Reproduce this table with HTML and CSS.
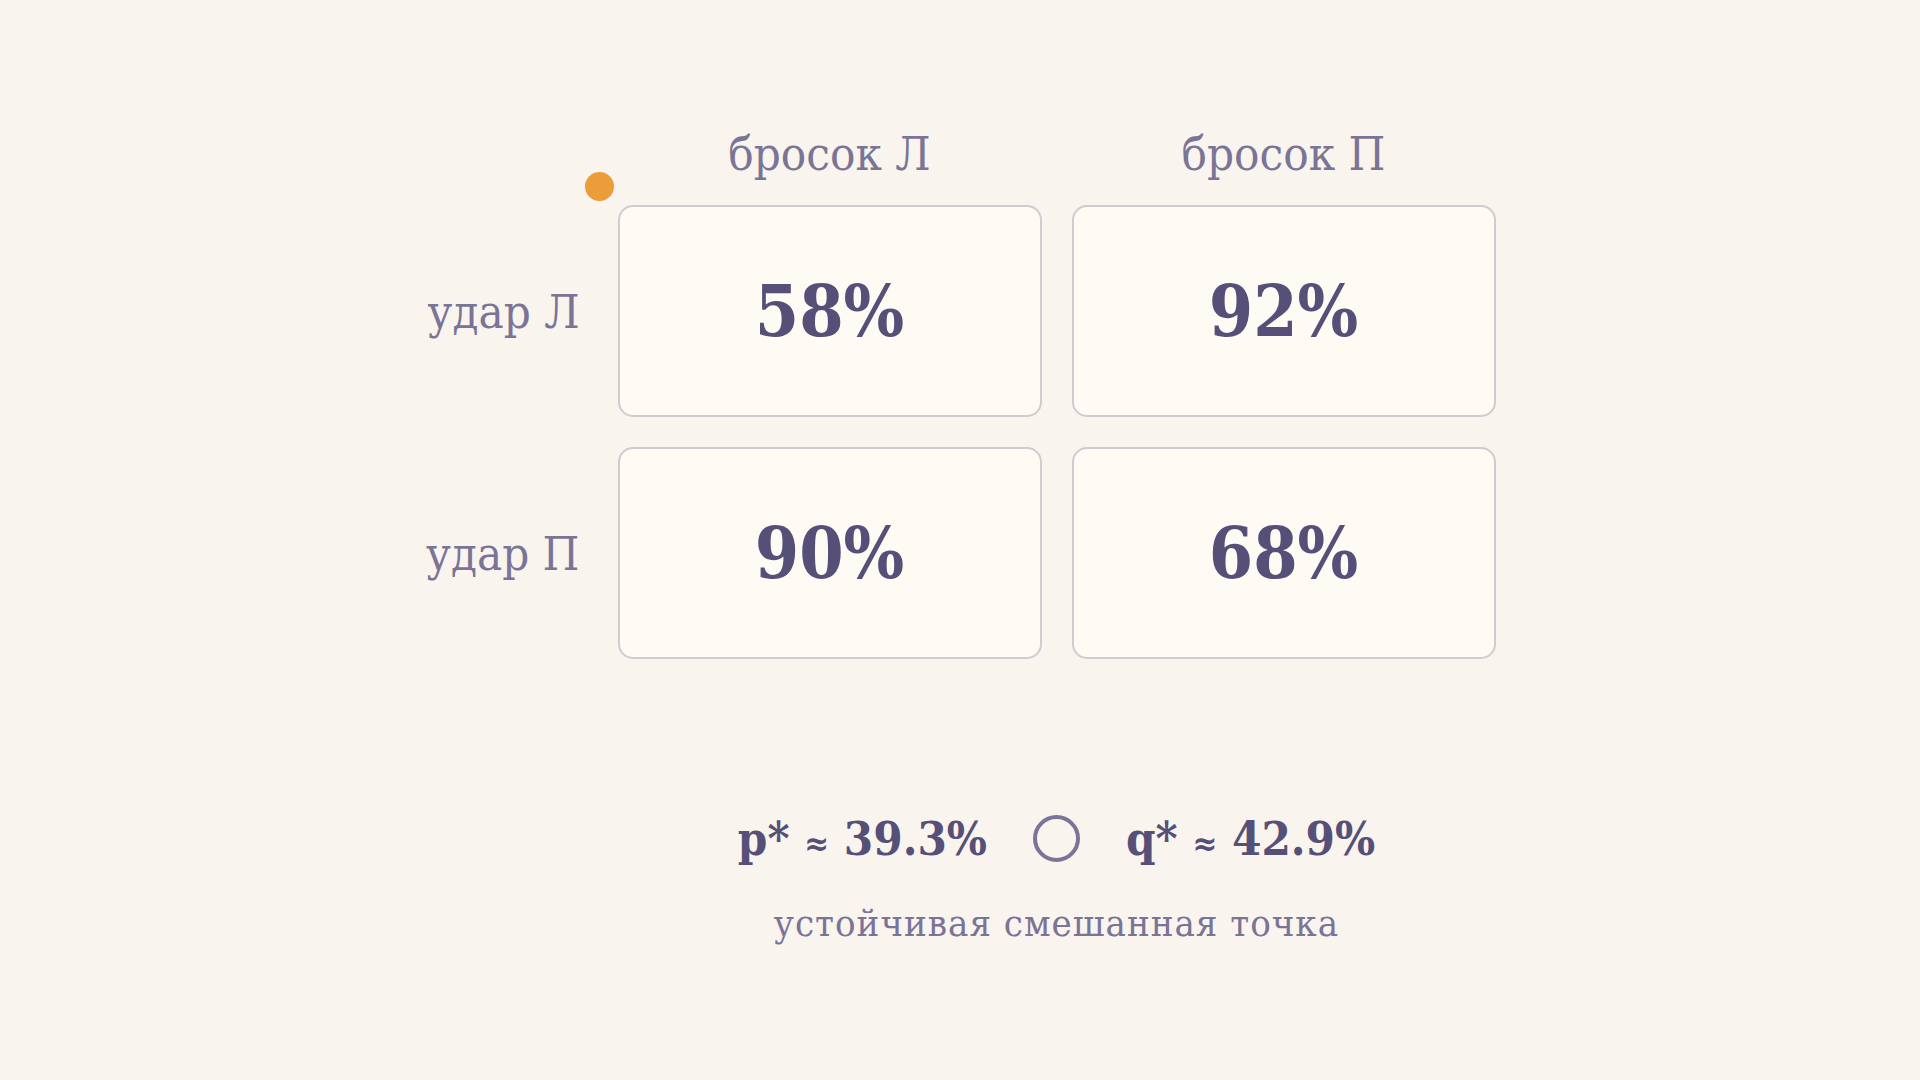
FILE: index.html
```html
<!DOCTYPE html>
<html lang="ru">
<head>
<meta charset="utf-8">
<title>Матрица пенальти</title>
<link rel="stylesheet" href="styles.css">
</head>
<body>
<main class="page">
  <section class="matrix">
    <div class="corner"></div>
    <div class="col-head">бросок Л</div>
    <div class="col-head">бросок П</div>

    <div class="row-head">удар Л</div>
    <div class="cell cell-first"><span class="dot"></span><span class="value">58%</span></div>
    <div class="cell"><span class="value">92%</span></div>

    <div class="row-head">удар П</div>
    <div class="cell"><span class="value">90%</span></div>
    <div class="cell"><span class="value">68%</span></div>

    <div class="corner"></div>
    <div class="summary">
      <div class="eq">
        <span class="stat">p* <span class="approx">≈</span> 39.3%</span>
        <span class="ring"></span>
        <span class="stat">q* <span class="approx">≈</span> 42.9%</span>
      </div>
      <div class="caption">устойчивая смешанная точка</div>
    </div>
  </section>
</main>
</body>
</html>
```

FILE: styles.css
```css
html, body {
  margin: 0;
  padding: 0;
  background: #f9f4ee;
}

body {
  width: 1920px;
  height: 1080px;
  overflow: hidden;
  font-family: "DejaVu Serif", serif;
  font-stretch: condensed;
}

.page {
  display: flex;
  justify-content: center;
  padding-top: 120px;
}

.matrix {
  display: grid;
  grid-template-columns: 163px 424px 424px;
  grid-template-rows: 55px 212px 212px auto;
  column-gap: 30px;
  row-gap: 30px;
}

.col-head {
  display: flex;
  justify-content: center;
  align-items: flex-end;
  font-size: 47px;
  color: #7a7596;
  line-height: 0.9;
}

.row-head {
  display: flex;
  justify-content: flex-end;
  align-items: center;
  padding-right: 8px;
  font-size: 47px;
  color: #7a7596;
  line-height: 1;
}

.cell {
  position: relative;
  display: flex;
  justify-content: center;
  align-items: center;
  background: #fefaf4;
  border: 2px solid #d0cbd0;
  border-radius: 15px;
}

.value {
  font-size: 71px;
  font-weight: 700;
  color: #565078;
  line-height: 1;
}

.dot {
  position: absolute;
  left: -35px;
  top: -35px;
  width: 29px;
  height: 29px;
  border-radius: 50%;
  background: #ea9d38;
}

.summary {
  grid-column: 2 / 4;
  display: flex;
  flex-direction: column;
  align-items: center;
  padding-top: 126px;
}

.eq {
  display: flex;
  align-items: center;
  gap: 46px;
  color: #565078;
  font-weight: 700;
  font-size: 47px;
  line-height: 1;
}

.approx {
  font-size: 33px;
}

.ring {
  width: 39px;
  height: 39px;
  border: 4px solid #7a7596;
  border-radius: 50%;
}

.caption {
  margin-top: 42px;
  font-size: 38px;
  color: #7a7596;
  letter-spacing: 1px;
  line-height: 1;
}
```
